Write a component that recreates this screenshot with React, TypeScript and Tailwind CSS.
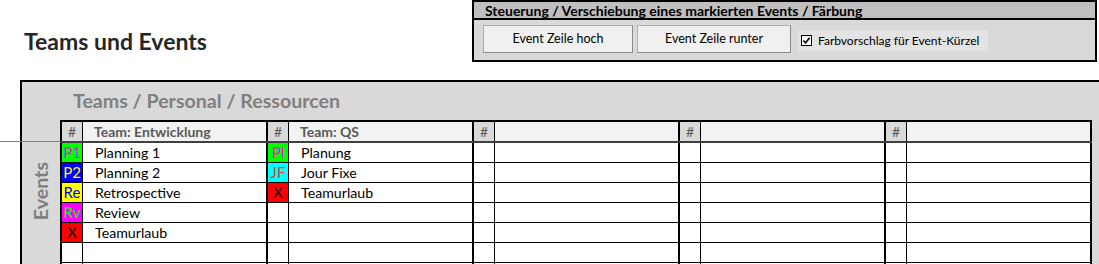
import React from "react"

type Entry = {code: string; bg: string; fg: string; name: string}

const teams: {title: string; entries: Entry[]}[] = [
  {
    title: "Team: Entwicklung",
    entries: [
      {code: "P1", bg: "bg-[#00ff00]", fg: "text-[#ff00ff]", name: "Planning 1"},
      {code: "P2", bg: "bg-[#0000ff]", fg: "text-[#ffff00]", name: "Planning 2"},
      {code: "Re", bg: "bg-[#ffff00]", fg: "text-[#0000ff]", name: "Retrospective"},
      {code: "Rv", bg: "bg-[#ff00ff]", fg: "text-[#00ff00]", name: "Review"},
      {code: "X", bg: "bg-[#ff0000]", fg: "text-black", name: "Teamurlaub"}
    ]
  },
  {
    title: "Team: QS",
    entries: [
      {code: "Pl", bg: "bg-[#00ff00]", fg: "text-[#ff00ff]", name: "Planung"},
      {code: "JF", bg: "bg-[#00ffff]", fg: "text-[#ff3333]", name: "Jour Fixe"},
      {code: "X", bg: "bg-[#ff0000]", fg: "text-black", name: "Teamurlaub"}
    ]
  },
  {title: "", entries: []},
  {title: "", entries: []},
  {title: "", entries: []}
]

const ROWS = 7

const ControlPanel = () => (
  <div className="mr-[2px] flex h-[62px] w-[625px] flex-col border-2 border-black bg-[#d9d9d9]">
    <div className="h-[18px] border-b-2 border-black bg-[#bfbfbf] pl-[11px] text-[14px] leading-[18px] font-bold text-black">
      Steuerung / Verschiebung eines markierten Events / Färbung
    </div>
    <div className="flex items-start pt-[5px] pl-[9px]">
      <button className="h-[28px] w-[150px] border border-[#adadad] border-r-[#8a8a8a] border-b-[#8a8a8a] bg-[#f0f0f0] text-[12.5px] text-black">
        Event Zeile hoch
      </button>
      <button className="ml-[4px] h-[28px] w-[154px] border border-[#adadad] border-r-[#8a8a8a] border-b-[#8a8a8a] bg-[#f0f0f0] text-[12.5px] text-black">
        Event Zeile runter
      </button>
      <label className="mt-[5px] ml-[7px] flex h-[21px] w-[190px] items-center gap-[6px] bg-[#e3e3e3] pl-[3px] text-[12px] text-black">
        <span className="flex h-[11px] w-[11px] items-center justify-center border border-black bg-white">
          <svg viewBox="0 0 10 10" className="h-[9px] w-[9px]">
            <path d="M1.5 5 L4 7.5 L8.5 2" fill="none" stroke="black" strokeWidth="1.8" />
          </svg>
        </span>
        Farbvorschlag für Event-Kürzel
      </label>
    </div>
  </div>
)

const HeaderRow = () => (
  <div className="flex h-[21px] border-b-2 border-[#3f3f3f]">
    {teams.map((t, i) => (
      <div key={i} className="flex border-l-2 border-black">
        <div className="w-[21px] border-r border-black bg-[#d9d9d9] text-center text-[14px] leading-[19px] text-[#595959]">
          #
        </div>
        <div className="w-[183px] truncate bg-[#f2f2f2] pl-[11px] text-[14px] leading-[19px] font-bold text-[#595959]">
          {t.title}
        </div>
      </div>
    ))}
    <div className="border-l-2 border-black" />
  </div>
)

const BodyRow = ({row}: {row: number}) => (
  <div className="flex h-[20px] border-b border-black bg-white">
    {teams.map((t, i) => {
      const e = t.entries[row]
      return (
        <div key={i} className="flex border-l-2 border-black">
          <div
            className={`w-[21px] border-r border-black text-center text-[15px] leading-[19px] ${
              e ? `${e.bg} ${e.fg}` : ""
            }`}>
            {e?.code}
          </div>
          <div className="w-[183px] pl-[12px] text-[14.2px] leading-[19px] text-black">{e?.name}</div>
        </div>
      )
    })}
    <div className="border-l-2 border-black" />
  </div>
)

const App = function App() {
  return (
    <div className="relative h-[264px] w-[1099px] overflow-hidden bg-white font-['Lato',sans-serif]">
      <div className="flex h-[80px] items-start justify-between">
        <h1 className="pt-[24px] pl-[24px] text-[23px] font-bold text-[#262626]">Teams und Events</h1>
        <ControlPanel />
      </div>
      <div className="ml-[20px] flex flex-col border-t-2 border-l-2 border-black bg-[#d9d9d9]">
        <div className="h-[38px] pt-[8px] pl-[51px] text-[19.6px] leading-[22px] font-bold text-[#808080]">
          Teams / Personal / Ressourcen
        </div>
        <div className="flex">
          <div className="flex w-[38px] items-start justify-center pt-[42px]">
            <span className="rotate-180 text-[19.6px] leading-[22px] font-bold text-[#808080] [writing-mode:vertical-rl]">
              Events
            </span>
          </div>
          <div className="border-t-2 border-black">
            <HeaderRow />
            {Array.from({length: ROWS}).map((_, r) => (
              <BodyRow key={r} row={r} />
            ))}
          </div>
        </div>
      </div>
      <div className="absolute top-[141px] left-0 h-px w-[60px] bg-[#7f7f7f]" />
    </div>
  )
}

export default App
